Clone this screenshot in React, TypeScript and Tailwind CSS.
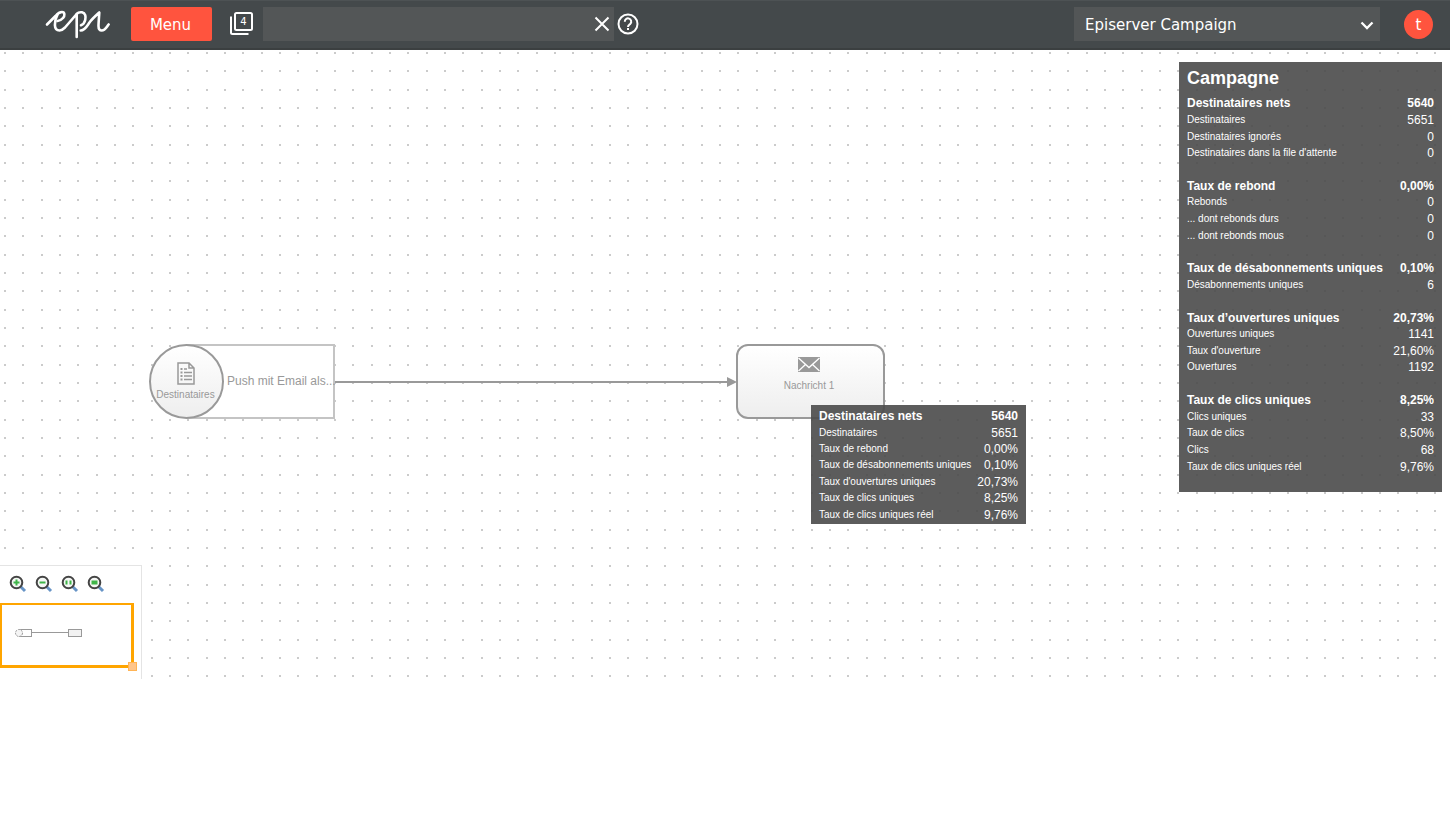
import React from "react";

type Row = { label: string; value: string; bold?: boolean };

const groups: Row[][] = [
  [
    { label: "Destinataires nets", value: "5640", bold: true },
    { label: "Destinataires", value: "5651" },
    { label: "Destinataires ignorés", value: "0" },
    { label: "Destinataires dans la file d'attente", value: "0" },
  ],
  [
    { label: "Taux de rebond", value: "0,00%", bold: true },
    { label: "Rebonds", value: "0" },
    { label: "... dont rebonds durs", value: "0" },
    { label: "... dont rebonds mous", value: "0" },
  ],
  [
    { label: "Taux de désabonnements uniques", value: "0,10%", bold: true },
    { label: "Désabonnements uniques", value: "6" },
  ],
  [
    { label: "Taux d’ouvertures uniques", value: "20,73%", bold: true },
    { label: "Ouvertures uniques", value: "1141" },
    { label: "Taux d'ouverture", value: "21,60%" },
    { label: "Ouvertures", value: "1192" },
  ],
  [
    { label: "Taux de clics uniques", value: "8,25%", bold: true },
    { label: "Clics uniques", value: "33" },
    { label: "Taux de clics", value: "8,50%" },
    { label: "Clics", value: "68" },
    { label: "Taux de clics uniques réel", value: "9,76%" },
  ],
];

const messageRows: Row[] = [
  { label: "Destinataires nets", value: "5640", bold: true },
  { label: "Destinataires", value: "5651" },
  { label: "Taux de rebond", value: "0,00%" },
  { label: "Taux de désabonnements uniques", value: "0,10%" },
  { label: "Taux d'ouvertures uniques", value: "20,73%" },
  { label: "Taux de clics uniques", value: "8,25%" },
  { label: "Taux de clics uniques réel", value: "9,76%" },
];

function StatRow({ label, value, bold }: Row) {
  return (
    <tr>
      <th
        scope="row"
        className={
          bold
            ? "p-0 text-left align-middle text-[12px] leading-4 font-bold whitespace-nowrap"
            : "p-0 text-left align-middle text-[10px] leading-4 font-normal whitespace-nowrap"
        }
      >
        {label}
      </th>
      <td
        className={
          bold
            ? "p-0 text-right align-middle text-[12px] leading-4 font-bold"
            : "p-0 text-right align-middle text-[12px] leading-4"
        }
      >
        {value}
      </td>
    </tr>
  );
}

function Logo() {
  return (
    <svg viewBox="0 0 65 30" className="h-[30px] w-[65px] shrink-0" fill="none" stroke="#fff" strokeWidth="2.6" strokeLinecap="round" strokeLinejoin="round" aria-label="epi" role="img">
      <path d="M2 15.500 L10.500 7 C13 4 15 3 17 3 C20 3 20 7 18 9 C16.500 10.800 14.500 11.800 12.500 12" />
      <path d="M12.500 5.500 C10.500 9 9.800 12 9.900 16 C10 20 12 21.500 14.500 21.500 C17 21.500 18.500 20 20 18.500 L31.700 5 V28" />
      <path d="M31.700 5 C33 3.500 35 3 37 3.300 C40.500 4 41 7.500 40.200 11 C39.600 13.500 38 15.500 36 16.200" />
      <path d="M35.700 21.500 C40 21.500 42 17 44.500 13.500 C47 10 51 6.500 54.300 3.500 C54 9 53.500 14 53.500 17 C53.500 20 54.800 21.500 56.800 21.500 C60 21.500 61.500 18 63.600 15.500" />
    </svg>
  );
}

function Tabs4() {
  return (
    <svg viewBox="0 0 24 24" className="size-6" aria-hidden="true">
      <path d="M2 4.500 V20.500 a1.500 1.500 0 0 0 1.500 1.500 H19.500" fill="none" stroke="#fff" strokeWidth="2" />
      <rect x="6" y="1" width="17" height="17" rx="1.500" fill="none" stroke="#fff" strokeWidth="2" />
      <text x="14.500" y="13" textAnchor="middle" fill="#fff" fontSize="10" fontFamily="DejaVu Sans, sans-serif">4</text>
    </svg>
  );
}

function Magnifier({ label, children }: { label: string; children: React.ReactNode }) {
  return (
    <button type="button" aria-label={label} className="size-[18px]">
      <svg viewBox="0 0 18 18" className="size-[18px]" aria-hidden="true">
        <path d="M11.500 11.500 L16 16" stroke="#6794c6" strokeWidth="3" />
        <circle cx="7.500" cy="7.500" r="5.800" fill="#f5f7f5" stroke="#444" strokeWidth="2" />
        {children}
      </svg>
    </button>
  );
}

export default function App() {
  return (
    <div className="bg-white font-['Liberation_Sans',Arial,sans-serif]">
      <header className="flex h-[50px] items-start border-t border-b-2 border-t-[#4d5254] border-b-[#3b3f40] bg-[#44494b] pt-1.5 font-['DejaVu_Sans',Verdana,sans-serif] text-[15px] text-white">
        <a href="#" aria-label="Episerver" className="ml-[45px] mt-0.5">
          <Logo />
        </a>
        <button type="button" className="ml-[21px] h-[34px] w-[81px] rounded-xs bg-[#ff543e] pt-0.5 pr-0.5">Menu</button>
        <button type="button" aria-label="Onglets" className="ml-[17px] mt-[5px] size-6">
          <Tabs4 />
        </button>
        <div className="ml-[10px] flex h-[34px] w-[351px] items-center bg-[#535657] pr-1">
          <input aria-label="Recherche" className="h-full min-w-0 flex-1 bg-transparent px-2 outline-none" />
          <button type="button" aria-label="Effacer">
            <svg viewBox="0 0 16 16" className="size-4" aria-hidden="true">
              <path d="M1.500 1.500 L14.500 14.500 M14.500 1.500 L1.500 14.500" stroke="#fff" strokeWidth="2" />
            </svg>
          </button>
        </div>
        <button type="button" aria-label="Aide" className="ml-[3px] mt-1.5 size-[22px]">
          <svg viewBox="0 0 22 22" className="size-[22px]" fill="none" stroke="#fff" strokeWidth="2" aria-hidden="true">
            <circle cx="11" cy="11" r="9.500" />
            <path d="M7.800 8.700 a3.200 3.200 0 1 1 5.600 2 c-1.200 1.200 -2.400 1.700 -2.400 3.200 M11 15 v2" />
          </svg>
        </button>
        <div className="relative ml-auto h-[34px] w-[306px]">
          <select aria-label="Produit" className="h-full w-full appearance-none bg-[#535657] px-[11px] pt-0.5 outline-none">
            <option>Episerver Campaign</option>
          </select>
          <svg viewBox="0 0 14 10" className="pointer-events-none absolute top-[14px] right-1.5 h-[10px] w-[14px]" aria-hidden="true">
            <path d="M1.500 1.500 L7 7 L12.500 1.500" fill="none" stroke="#fff" strokeWidth="2.300" />
          </svg>
        </div>
        <button type="button" aria-label="Compte" className="mt-[3px] mr-[17px] ml-6 size-[29px] rounded-full bg-[#ff543e] pt-0.5 leading-none">t</button>
      </header>

      <main className="relative h-[629px] overflow-hidden">
        <svg className="absolute inset-0 h-full w-full" aria-hidden="true">
          <defs>
            <pattern id="dots" width="55" height="55" patternUnits="userSpaceOnUse">
              {[2, 20, 39].map((y) =>
                [4, 22, 41].map((x) => <rect key={`${x}-${y}`} x={x} y={y} width="2" height="2" fill="#cbcbcb" />),
              )}
            </pattern>
          </defs>
          <rect width="100%" height="100%" fill="url(#dots)" />
        </svg>

        <svg className="absolute top-[326px] left-[334px] h-[12px] w-[403px]" viewBox="0 0 403 12" aria-hidden="true">
          <path d="M0 6 H394" stroke="#999" strokeWidth="2" />
          <path d="M393 1 L403 6 L393 11 Z" fill="#999" />
        </svg>

        <div className="absolute top-[294px] left-[149px] flex h-[75px] w-[186px] items-center">
          <div className="absolute inset-y-0 right-0 left-[38px] border-2 border-[#c4c4c4] bg-white" />
          <div className="relative flex size-[75px] shrink-0 flex-col items-center rounded-full border-2 border-[#999] bg-linear-to-b from-white to-[#eeeeee] pt-4 pr-0.5 text-[10px] leading-4 text-[#999]">
            <svg viewBox="0 0 18 23" className="h-[23px] w-[18px]" fill="none" stroke="#999" strokeWidth="1.500" aria-hidden="true">
              <path d="M1 1 H12 L17 6 V22 H1 Z M12 1 V6 H17" />
              <path d="M3.500 7 h2 M3.500 10.500 h2 M3.500 14 h2 M3.500 17.500 h2" strokeWidth="2" />
              <path d="M7 7 h3 M7 10.500 h8 M7 14 h8 M7 17.500 h8" />
            </svg>
            <span className="mt-0.5">Destinataires</span>
          </div>
          <span className="relative ml-[3px] pb-0.5 text-[12px] leading-4 whitespace-nowrap text-[#999]">Push mit Email als...</span>
        </div>

        <div className="absolute top-[294px] left-[736px] flex h-[75px] w-[149px] flex-col items-center rounded-[12px] border-2 border-[#999] bg-linear-to-b from-white to-[#eeeeee] pt-[11px] pr-[3px] text-[10px] leading-4 text-[#999]">
          <svg viewBox="0 0 22 15" className="h-[15px] w-[22px]" aria-hidden="true">
            <rect width="22" height="15" fill="#999" />
            <path d="M0.500 1 L11 10.500 L21.500 1 M0.500 14 L7.500 7.500 M21.500 14 L14.500 7.500" fill="none" stroke="#fff" strokeWidth="1.300" />
          </svg>
          <span className="mt-1.5">Nachricht 1</span>
        </div>

        <section aria-label="Nachricht 1" className="absolute top-[355px] left-[811px] w-[215px] bg-[#4a4a4a]/90 px-2 pt-[3px] pb-px text-white">
          <table className="h-[115px] w-full border-collapse">
            <tbody>
              {messageRows.map((row) => (
                <StatRow key={row.label} {...row} />
              ))}
            </tbody>
          </table>
        </section>

        <section className="absolute top-[12px] right-[8px] w-[263px] bg-[#4a4a4a]/90 px-2 pb-[17px] text-white">
          <h1 className="pt-1 pb-[5px] text-[18px] leading-6 font-bold">Campagne</h1>
          <table className="h-[380px] w-full border-collapse">
            <tbody>
              {groups.map((rows, index) => (
                <React.Fragment key={rows[0].label}>
                  {index > 0 && (
                    <tr aria-hidden="true">
                      <td colSpan={2} className="h-4 p-0" />
                    </tr>
                  )}
                  {rows.map((row) => (
                    <StatRow key={row.label} {...row} />
                  ))}
                </React.Fragment>
              ))}
            </tbody>
          </table>
        </section>

        <aside aria-label="Vue d'ensemble" className="absolute bottom-0 left-0 h-[114px] w-[142px] border-t border-r border-[#e4e4e4] bg-white">
          <div className="flex gap-2 pt-[9px] pl-[9px]">
            <Magnifier label="Agrandir">
              <path d="M4.500 7.500 h6 M7.500 4.500 v6" stroke="#3fb549" strokeWidth="2" />
            </Magnifier>
            <Magnifier label="Réduire">
              <path d="M4.500 7.500 h6" stroke="#3fb549" strokeWidth="2" />
            </Magnifier>
            <Magnifier label="Taille réelle">
              <path d="M5.500 5.500 v4 M9.500 5.500 v4" stroke="#3fb549" strokeWidth="2" />
            </Magnifier>
            <Magnifier label="Ajuster">
              <rect x="4.500" y="5.500" width="6" height="4" fill="#3fb549" />
            </Magnifier>
          </div>
          <svg viewBox="0 0 138 70" className="mt-[9px] h-[70px] w-[138px]" aria-hidden="true">
            <path d="M0 1 H134 V66 H0 Z M2 3 V63 H131 V3 Z" fill="#ffa500" fillRule="evenodd" />
            <rect x="128.500" y="60.500" width="8" height="8" fill="#ffc58a" stroke="#ffb455" />
            <path d="M31.500 30.500 H68" stroke="#999" />
            <rect x="19.500" y="27.500" width="12" height="7" fill="#fff" stroke="#999" />
            <circle cx="19" cy="31" r="3.500" fill="#f5f5f5" stroke="#999" strokeDasharray="2 1" />
            <rect x="68.500" y="27.500" width="13" height="7" fill="#f2f2f2" stroke="#999" />
          </svg>
        </aside>
      </main>
    </div>
  );
}
